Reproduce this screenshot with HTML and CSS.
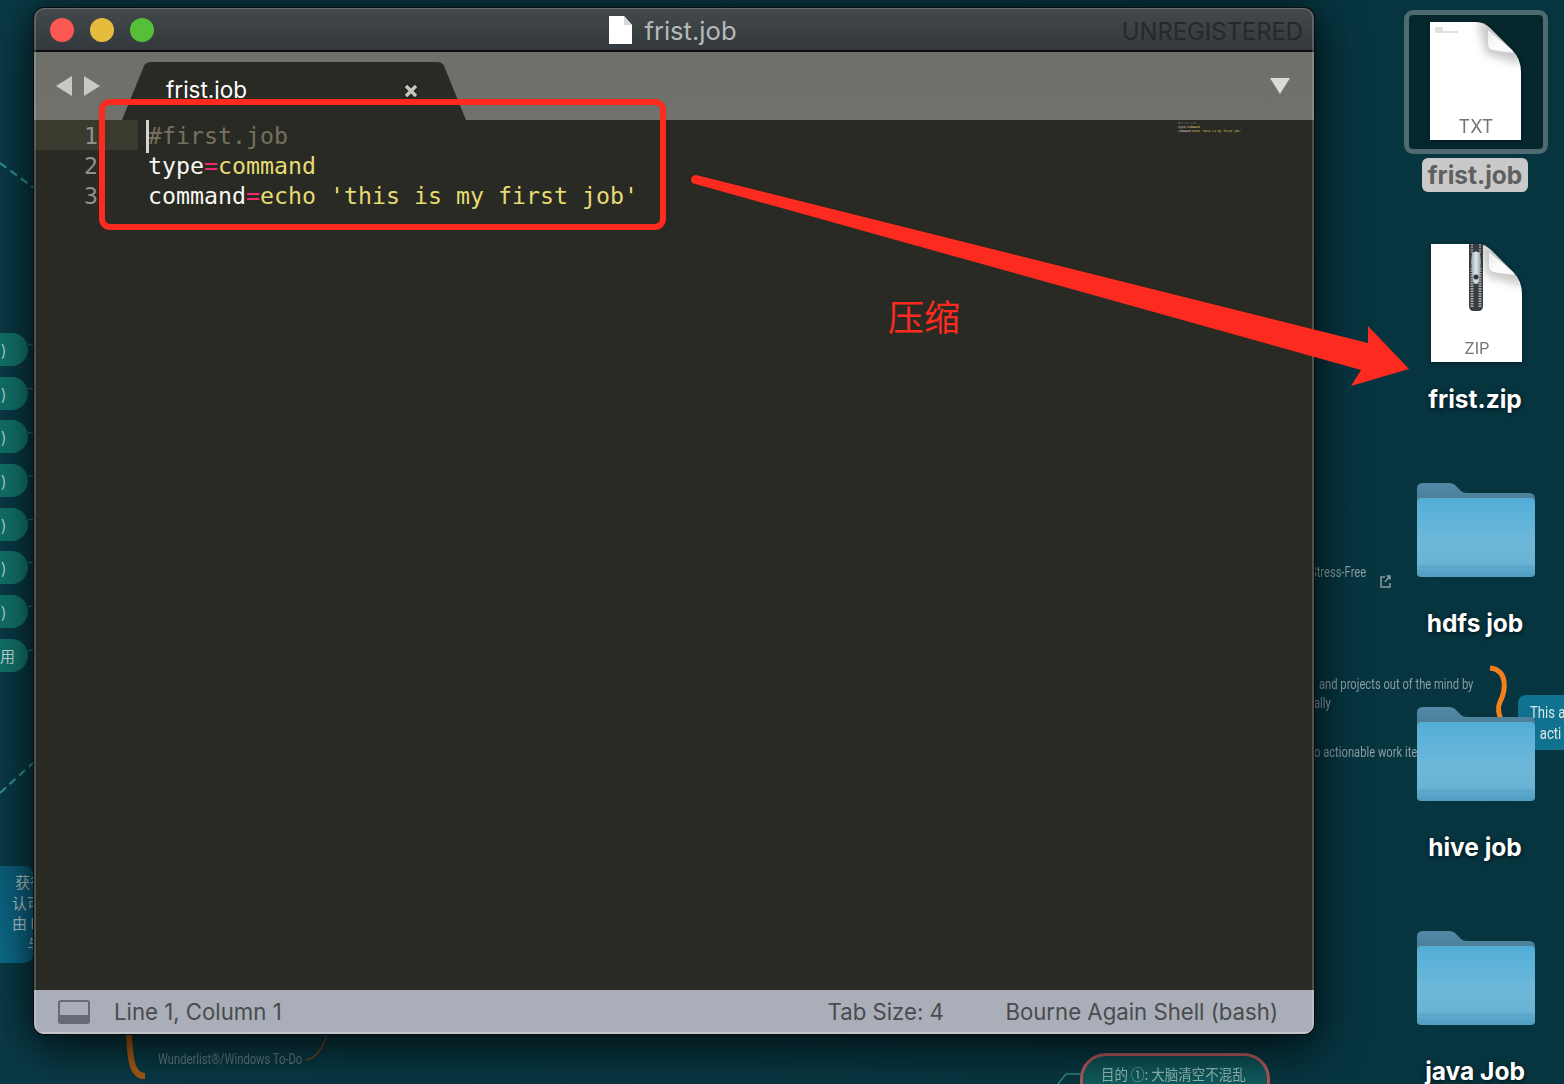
FILE: index.html
```html
<!DOCTYPE html>
<html lang="en">
<head>
<meta charset="utf-8">
<title>frist.job</title>
<link rel="stylesheet" href="styles.css">
</head>
<body>
<svg class="defs" width="0" height="0" aria-hidden="true">
  <defs>
    <linearGradient id="folderFront" x1="0" y1="0" x2="0" y2="1">
      <stop offset="0" stop-color="#52aed7"/><stop offset=".55" stop-color="#6eb8da"/><stop offset=".82" stop-color="#69b3d4"/><stop offset="1" stop-color="#4f9dc2"/>
    </linearGradient>
    <linearGradient id="folderBack" x1="0" y1="0" x2="0" y2="1">
      <stop offset="0" stop-color="#5389a6"/><stop offset="1" stop-color="#3f7089"/>
    </linearGradient>
    <linearGradient id="foldShade" x1="0" y1="0" x2="1" y2="1">
      <stop offset="0" stop-color="#ececec"/><stop offset=".55" stop-color="#fdfdfd"/><stop offset="1" stop-color="#f4f4f4"/>
    </linearGradient>
    <linearGradient id="slider" x1="0" y1="0" x2="1" y2="0">
      <stop offset="0" stop-color="#8ea3ac"/><stop offset=".5" stop-color="#dfe7ea"/><stop offset="1" stop-color="#8c9ca4"/>
    </linearGradient>
    <filter id="soft" x="-30%" y="-30%" width="160%" height="160%"><feGaussianBlur stdDeviation="4"/></filter>
    <clipPath id="pageClip"><path d="M0 0H46Q54 0 60 6L82 28Q91 37 91 50V118H0Z"/></clipPath>
    <symbol id="folder" viewBox="0 0 118 94">
      <path d="M0 6Q0 0 6 0H32Q37 0 40 4L44 8Q46 10 50 10H112Q118 10 118 16V40H0Z" fill="url(#folderBack)"/>
      <path d="M0 20Q0 15 5 15H113Q118 15 118 20V90Q118 94 114 94H4Q0 94 0 90Z" fill="url(#folderFront)"/>
      <path d="M0 84H118M0 87H118M0 90H118" stroke="#4f9cc0" stroke-width="1" opacity=".7"/>
    </symbol>
    <symbol id="doc" viewBox="0 0 91 118">
      <path d="M0 0H46Q54 0 60 6L82 28Q91 37 91 50V118H0Z" fill="#fff"/>
      <g clip-path="url(#pageClip)">
        <path d="M48 0L56 32L91 42V20L60 0Z" fill="#9a9a9a" opacity=".55" filter="url(#soft)"/>
      </g>
      <path d="M58 8L82 28L84 31Q72 30 63 28Q58 27 58 22Z" fill="url(#foldShade)"/>
    </symbol>
  </defs>
</svg>

<div class="mindmap">
  <div class="pills">
    <div class="pill">)</div><div class="pill">)</div><div class="pill">)</div><div class="pill">)</div>
    <div class="pill">)</div><div class="pill">)</div><div class="pill">)</div><div class="pill pill-last">用</div>
  </div>
  <div class="blue-left">&nbsp;获得<br>认可<br>由 D<br>&emsp;与</div>
  <div class="blue-right"><div class="narrow">This a<br>&nbsp;&nbsp;&nbsp;acti</div></div>
  <span class="note note-stress">Stress-Free</span>
  <span class="note note-mind">and projects out of the mind by</span>
  <span class="note note-ally">ally</span>
  <span class="note note-work">o actionable work items</span>
  <span class="note note-wunder">Wunderlist®/Windows To-Do</span>
  <div class="goal-pill"><span class="goal-text">目的 ①: 大脑清空不混乱</span></div>
  <svg class="map-lines" width="1564" height="1084" viewBox="0 0 1564 1084" fill="none">
    <path d="M0 163L34 188M0 793L34 762" stroke="#2f9c95" stroke-width="2" stroke-dasharray="8 5"/>
    <path d="M28 344L34 346M28 388L34 390M28 432L34 434M28 476L34 476M28 520L34 519M28 563L34 562M28 607L34 605M28 651L34 649" stroke="#2f8c88" stroke-width="1"/>
    <path d="M1490 668C1508 670 1506 690 1500 702C1497 708 1499 714 1501 720" stroke="#f47f1c" stroke-width="5"/>
    <path d="M129 1034C130 1060 132 1076 145 1076" stroke="#a85a18" stroke-width="6"/>
    <path d="M327 1034C322 1050 316 1058 306 1060" stroke="#7a4418" stroke-width="1.5"/>
    <path d="M1058 1084L1066 1074H1081" stroke="#2f8c88" stroke-width="1.5"/>
    <path d="M1385 577H1381V587H1390V583M1385 582L1390 576M1386.500 576H1390V579.500" stroke="#8a9a9e" stroke-width="1.500"/>
  </svg>
</div>

<main class="window">
  <header class="titlebar">
    <div class="lights">
      <span class="light light-red"></span><span class="light light-yellow"></span><span class="light light-green"></span>
    </div>
    <div class="title">
      <svg class="title-doc" width="23" height="28" viewBox="0 0 23 28"><path d="M0 0H15L23 9V28H0Z" fill="#fff"/><path d="M15 0V9H23Z" fill="#d8d8d8"/></svg>
      <span class="title-name">frist.job</span>
    </div>
    <div class="unregistered">UNREGISTERED</div>
  </header>

  <div class="tabbar">
    <div class="nav">
      <span class="nav-left"></span><span class="nav-right"></span>
    </div>
    <div class="tab">
      <span class="tab-name">frist.job</span>
      <svg class="tab-close" width="14" height="14" viewBox="0 0 14 14"><path d="M2 2L12 12M12 2L2 12" stroke="#c9c9c2" stroke-width="3.200"/></svg>
    </div>
    <span class="tab-menu"></span>
  </div>

  <div class="editor">
    <div class="gutter">
      <div class="gutter-line gutter-active">1</div>
      <div class="gutter-line">2</div>
      <div class="gutter-line">3</div>
    </div>
    <div class="code">
      <span class="cursor"></span>
      <div class="code-line"><span class="c-comment">#first.job</span></div>
      <div class="code-line">type<span class="c-op">=</span><span class="c-str">command</span></div>
      <div class="code-line">command<span class="c-op">=</span><span class="c-str">echo 'this is my first job'</span></div>
    </div>
    <div class="minimap">
      <div class="mini-line c-comment">#first.job</div>
      <div class="mini-line">type<span class="c-op">=</span><span class="c-str">command</span></div>
      <div class="mini-line">command<span class="c-op">=</span><span class="c-str">echo 'this is my first job'</span></div>
    </div>
  </div>

  <footer class="statusbar">
    <span class="panel-icon"></span>
    <span class="status-pos">Line 1, Column 1</span>
    <span class="status-tab">Tab Size: 4</span>
    <span class="status-lang">Bourne Again Shell (bash)</span>
  </footer>
</main>

<aside class="desktop">
  <div class="item">
    <div class="icon-box icon-selected">
      <svg class="doc-svg doc-txt" width="91" height="118" viewBox="0 0 91 118">
        <use href="#doc" width="91" height="118"/>
        <path d="M5 6H13M5 8H13M5 10H28" stroke="#c4c4c4" stroke-width="1"/>
        <text x="46" y="111" class="doc-text">TXT</text>
      </svg>
    </div>
    <span class="label label-selected">frist.job</span>
  </div>
  <div class="item">
    <div class="icon-box icon-zip">
      <svg class="doc-svg" width="91" height="118" viewBox="0 0 91 118">
        <use href="#doc" width="91" height="118"/>
        <path d="M38 0H52V62Q52 67 47 67H43Q38 67 38 62Z" fill="#3a3d40"/>
        <path d="M41 24V64M49 24V64" stroke="#a7adb0" stroke-width="3" stroke-dasharray="1.500 1"/>
        <path d="M41 0V10M49 0V10" stroke="#8d9396" stroke-width="2" stroke-dasharray="1.500 1"/>
        <path d="M41 9Q45 6 49 9L50 18L48 38Q45 42 42 38L40 18Z" fill="url(#slider)"/>
        <circle cx="45" cy="33" r="2.500" fill="#333"/>
        <text x="46" y="110" class="doc-text doc-text-zip">ZIP</text>
      </svg>
    </div>
    <span class="label">frist.zip</span>
  </div>
  <div class="item">
    <div class="icon-box icon-folder"><svg width="118" height="94"><use href="#folder"/></svg></div>
    <span class="label">hdfs job</span>
  </div>
  <div class="item">
    <div class="icon-box icon-folder"><svg width="118" height="94"><use href="#folder"/></svg></div>
    <span class="label">hive job</span>
  </div>
  <div class="item">
    <div class="icon-box icon-folder"><svg width="118" height="94"><use href="#folder"/></svg></div>
    <span class="label">java Job</span>
  </div>
</aside>

<svg class="annotations" width="1564" height="1084" viewBox="0 0 1564 1084">
  <rect x="102" y="102" width="561" height="125" rx="8" fill="none" stroke="#fc2a1f" stroke-width="6"/>
  <path d="M696 175L1368 343L1368 326L1409 369L1351 386L1361 370L692 183Q689 176 696 175Z" fill="#fc2a1f"/>
</svg>
<div class="annotation-text">压缩</div>
</body>
</html>
```

FILE: styles.css
```css
* { box-sizing: border-box; }
html, body { margin: 0; padding: 0; }
body {
  position: relative;
  width: 1564px;
  height: 1084px;
  overflow: hidden;
  background: #07343f;
  font-family: "Inter", "Liberation Sans", sans-serif;
}
.defs { position: absolute; }

/* background mind map, a free canvas behind the window */
.mindmap { position: absolute; inset: 0; background: linear-gradient(90deg, #0a3a46 0, #06343f 100%); }
.map-lines { position: absolute; left: 0; top: 0; }
.pills {
  position: absolute;
  left: -40px;
  top: 333px;
  display: flex;
  flex-direction: column;
  gap: 10.700px;
}
.pill {
  width: 68px;
  height: 33px;
  padding-left: 41px;
  border-radius: 0 17px 17px 0;
  background: linear-gradient(90deg, #0e625f, #137a70);
  color: #c4dcd8;
  font: 15px/33px "Noto Sans CJK SC", "Noto Sans", sans-serif;
}
.pill-last { padding-left: 40px; }
.blue-left {
  position: absolute;
  left: -30px;
  top: 866px;
  width: 64px;
  height: 97px;
  padding: 6px 0 0 42px;
  overflow: hidden;
  border-radius: 10px;
  background: linear-gradient(160deg, #0c5c78, #0d6d8c);
  color: #b9ccd2;
  font: 15px/20.500px "Noto Sans CJK SC", sans-serif;
  white-space: nowrap;
}
.blue-right {
  position: absolute;
  left: 1518px;
  top: 695px;
  width: 80px;
  height: 55px;
  padding: 7px 0 0 12px;
  border-radius: 8px;
  background: #10728f;
  color: #d6e6ea;
  font: 16px/21px "Roboto", sans-serif;
}
.narrow { transform: scaleX(.82); transform-origin: left; white-space: nowrap; }
.note {
  position: absolute;
  white-space: nowrap;
  color: #8b9ea3;
  font: 14px/18px "Roboto", sans-serif;
  transform: scaleX(.8);
  transform-origin: left;
}
.note-stress { left: 1310px; top: 563px; }
.note-mind { left: 1319px; top: 675px; }
.note-ally { left: 1314px; top: 694px; }
.note-work { left: 1314px; top: 743px; }
.note-wunder { left: 158px; top: 1050px; color: #66787d; }
.goal-pill {
  position: absolute;
  left: 1080px;
  top: 1053px;
  width: 190px;
  height: 60px;
  padding-left: 18px;
  border: 3px solid #b0585a;
  border-radius: 26px;
  background: linear-gradient(180deg, #0e4f55, #106b68);
  color: #93b8b4;
  font: 15px/35px "Noto Sans CJK SC", sans-serif;
  white-space: nowrap;
}
.goal-text { display: inline-block; transform: scaleX(.9); transform-origin: left; }

/* editor window */
.window {
  position: absolute;
  left: 34px;
  top: 8px;
  width: 1280px;
  height: 1026px;
  display: flex;
  flex-direction: column;
  overflow: hidden;
  border-radius: 10px;
  background: #2a2a24;
  box-shadow: 0 0 0 1px #0a0d0e, 0 14px 50px rgba(0, 0, 0, .65), 0 0 30px rgba(0, 0, 0, .4);
}
.window::after {
  content: "";
  position: absolute;
  inset: 0;
  border: solid rgba(255, 255, 255, .18);
  border-width: 1px 2px 0;
  border-radius: 10px;
  pointer-events: none;
}
.titlebar {
  flex: none;
  height: 44px;
  display: grid;
  grid-template-columns: 1fr auto 1fr;
  align-items: center;
  padding: 2px 11px 0 16px;
  background: linear-gradient(180deg, #4c5052 0, #43484a 6%, #33393c 100%);
  border-bottom: 2px solid #0c0d0d;
}
.lights { display: flex; gap: 16px; }
.light { width: 24px; height: 24px; border-radius: 50%; }
.light-red { background: #fc5753; }
.light-yellow { background: #e5bc3c; }
.light-green { background: #56bf38; }
.title {
  display: flex;
  align-items: center;
  gap: 12px;
  padding-right: 7px;
  color: #b5b9ba;
  font-size: 25.600px;
}
.unregistered {
  justify-self: end;
  margin-top: 2px;
  color: #24292c;
  font-size: 23.800px;
  white-space: nowrap;
}
.tabbar {
  flex: none;
  position: relative;
  height: 68px;
  display: flex;
  align-items: flex-end;
  background: linear-gradient(180deg, #6e6f69, #72726c);
}
.nav {
  position: absolute;
  left: 22px;
  top: 24px;
  display: flex;
  gap: 12px;
}
.nav-left, .nav-right {
  width: 16px;
  height: 20px;
  background: #c9c9c4;
}
.nav-left { clip-path: polygon(100% 0, 100% 100%, 0 50%); }
.nav-right { clip-path: polygon(0 0, 100% 50%, 0 100%); }
.tab {
  position: relative;
  width: 344px;
  height: 58px;
  margin-left: 88px;
  padding-left: 44px;
  background: #2a2a24;
  clip-path: path("M0 58L22 4Q24 0 29 0L315 0Q320 0 322 4L344 58Z");
}
.tab-name {
  color: #fff;
  font: 22.500px/56px "Inter", "Liberation Sans", sans-serif;
}
.tab-close { position: absolute; left: 282px; top: 22px; }
.tab-menu {
  position: absolute;
  right: 24px;
  top: 26px;
  width: 20px;
  height: 16px;
  background: #dadad6;
  clip-path: polygon(0 0, 100% 0, 50% 100%);
}
.editor {
  flex: 1;
  position: relative;
  display: flex;
  background: #2a2a24;
  font: 23.250px/30px "DejaVu Sans Mono", monospace;
}
.gutter { flex: none; width: 104px; color: #8f908a; }
.gutter-line { height: 30px; padding-right: 40px; text-align: right; line-height: 32px; }
.gutter-active { background: #3b3a2e; }
.code { position: relative; padding: 1px 0 0 10px; color: #f8f8f2; }
.code-line { height: 30px; white-space: pre; }
.cursor { position: absolute; left: 8px; top: 0; width: 3px; height: 33px; background: #d6d6cf; }
.c-comment { color: #75715e; }
.c-op { color: #f92672; }
.c-str { color: #e6db74; }
.minimap {
  position: absolute;
  left: 1144px;
  top: 1px;
  color: #d8d8d0;
  font-size: 3px;
  line-height: 4px;
}
.mini-line { white-space: pre; }
.statusbar {
  flex: none;
  position: relative;
  height: 44px;
  display: flex;
  align-items: center;
  padding: 1px 0 0 24px;
  background: #a9aeb8;
  border-bottom: 2px solid #c3c6cd;
  color: #4a4b4e;
  font-size: 22.200px;
  white-space: nowrap;
}
.panel-icon {
  width: 32px;
  height: 24px;
  border: 2px solid #666a75;
  border-bottom-width: 9px;
  border-radius: 3px;
}
.status-pos { margin-left: 24px; }
.status-tab { margin-left: auto; }
.status-lang { margin-left: 61.500px; margin-right: 36px; }

/* desktop icons */
.desktop {
  position: absolute;
  left: 1404px;
  top: 10px;
  width: 144px;
  display: flex;
  flex-direction: column;
}
.item {
  height: 224px;
  display: flex;
  flex-direction: column;
  align-items: center;
}
.icon-box {
  position: relative;
  width: 144px;
  height: 144px;
  display: flex;
  justify-content: center;
  padding-top: 12px;
}
.icon-selected {
  border: 5px solid #4f6a70;
  border-radius: 9px;
  background: #06272e;
  padding-top: 7px;
}
.icon-zip { padding-top: 10px; }
.icon-folder { padding-top: 25px; }
.doc-svg { filter: drop-shadow(0 1px 2px rgba(0, 0, 0, .4)); }
.doc-txt { margin-right: 1px; }
.doc-text { fill: #757575; font-family: "Inter", sans-serif; font-size: 18px; text-anchor: middle; }
.doc-text-zip { font-size: 16.500px; }
.label {
  margin: 4px 2px 0 0;
  padding: 0 6px;
  color: #fff;
  font-weight: 700;
  font-size: 24.500px;
  line-height: 34px;
  text-shadow: 0 1px 4px rgba(0, 0, 0, .7);
  white-space: nowrap;
}
.label-selected {
  border-radius: 6px;
  background: #c9c9c9;
  color: #5f5f5f;
  text-shadow: none;
}

/* annotations on top of everything */
.annotations { position: absolute; left: 0; top: 0; pointer-events: none; }
.annotation-text {
  position: absolute;
  left: 888px;
  top: 290px;
  color: #fc2a1f;
  font: 36px/50px "Noto Sans CJK SC", sans-serif;
}
```
